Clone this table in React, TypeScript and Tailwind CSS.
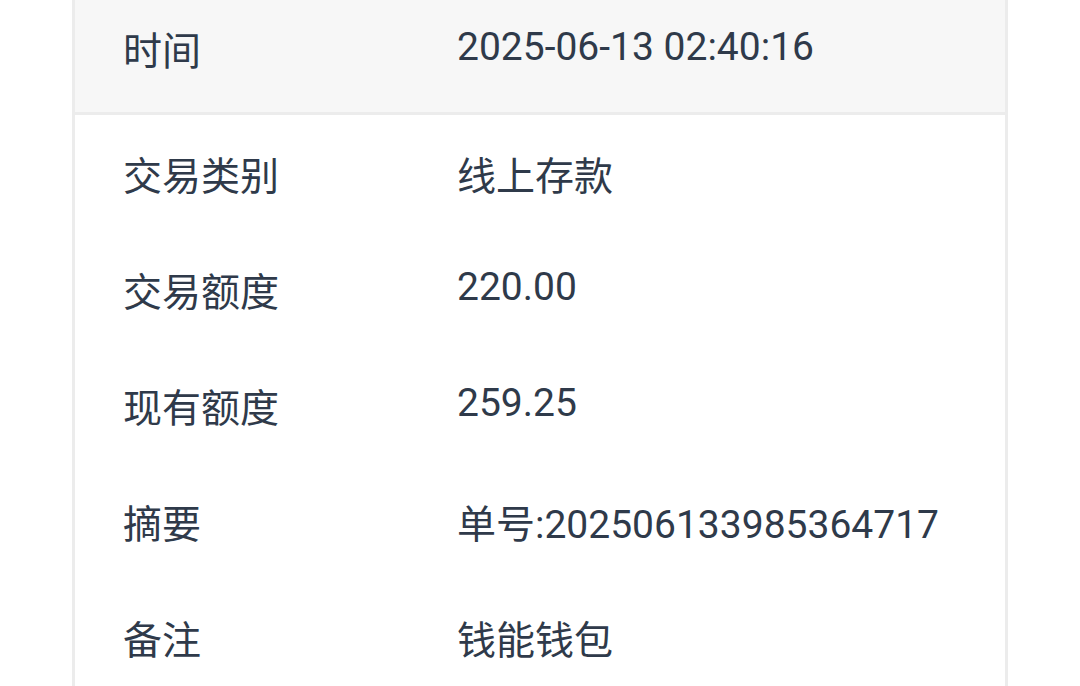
const rows = [
  { label: "交易类别", value: "线上存款" },
  { label: "交易额度", value: "220.00", num: true },
  { label: "现有额度", value: "259.25", num: true },
  { label: "摘要", value: "单号:202506133985364717" },
  { label: "备注", value: "钱能钱包" },
]

const font = "font-['Roboto','Noto_Sans_CJK_SC',sans-serif]"

export default function App() {
  return (
    <div className={`min-h-screen bg-white ${font} text-[#2f3a4a]`}>
      <div className="mx-[72px] w-[936px] border-x-[3px] border-[#ececec] h-[686px] overflow-hidden">
        <div className="flex items-center h-[115px] bg-[#f7f7f7] border-b-[3px] border-[#ececec] pb-[8px]">
          <div className="w-[382px] pl-[48px] text-[39px] leading-[56px]">时间</div>
          <div className="text-[39px] leading-[56px] pb-[10px]">2025-06-13 02:40:16</div>
        </div>
        {rows.map((r) => (
          <div key={r.label} className="flex h-[116px] items-center pt-[8px]">
            <div className="w-[382px] pl-[48px] text-[39px] leading-[56px]">{r.label}</div>
            <div className={r.num ? "text-[39px] leading-[56px] pb-[12px]" : "text-[39px] leading-[56px]"}>
              {r.value}
            </div>
          </div>
        ))}
      </div>
    </div>
  )
}
